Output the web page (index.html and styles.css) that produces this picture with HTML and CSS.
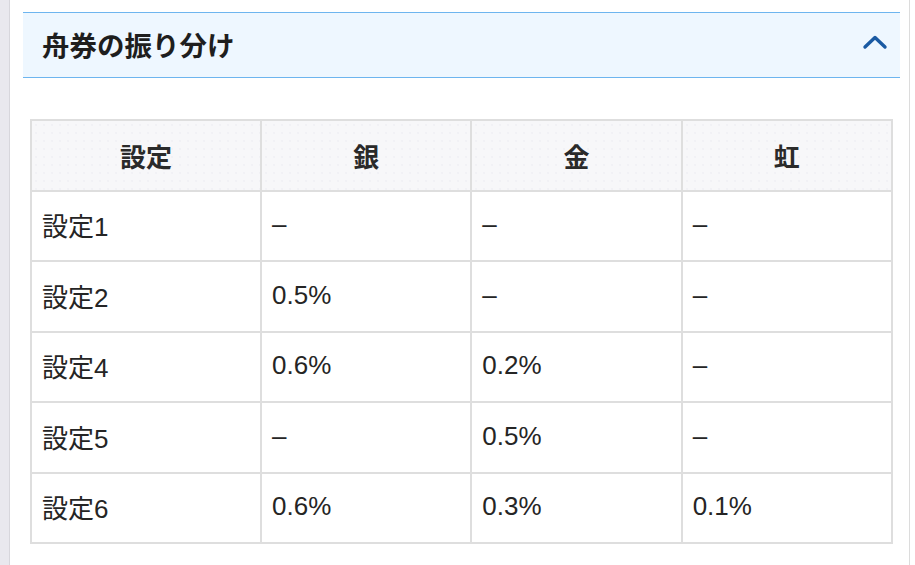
FILE: index.html
```html
<!DOCTYPE html>
<html lang="ja">
<head>
  <meta charset="UTF-8">
  <meta name="viewport" content="width=device-width, initial-scale=1.0">
  <title>舟券の振り分け</title>
  <link rel="stylesheet" href="styles.css">
</head>
<body>
  <div class="layout">
    <aside class="side"></aside>

    <main class="content">
      <!-- Accordion header -->
      <div class="acc-head">
        <h2>舟券の振り分け</h2>
        <svg class="chevron" width="26" height="16" viewBox="0 0 26 16">
          <polyline points="3,13 13,3.5 23,13" fill="none" stroke="#1a5aa3" stroke-width="3.4" stroke-linecap="round" stroke-linejoin="round"/>
        </svg>
      </div>

      <!-- Ticket table -->
      <table class="ticket-table">
        <colgroup>
          <col class="col-first">
          <col>
          <col>
          <col>
        </colgroup>
        <thead>
          <tr>
            <th>設定</th>
            <th>銀</th>
            <th>金</th>
            <th>虹</th>
          </tr>
        </thead>
        <tbody>
          <tr><td>設定1</td><td>–</td><td>–</td><td>–</td></tr>
          <tr><td>設定2</td><td>0.5%</td><td>–</td><td>–</td></tr>
          <tr><td>設定4</td><td>0.6%</td><td>0.2%</td><td>–</td></tr>
          <tr><td>設定5</td><td>–</td><td>0.5%</td><td>–</td></tr>
          <tr><td>設定6</td><td>0.6%</td><td>0.3%</td><td>0.1%</td></tr>
        </tbody>
      </table>
    </main>
  </div>
</body>
</html>
```

FILE: styles.css
```css
* {
  margin: 0;
  padding: 0;
  box-sizing: border-box;
}
body {
  font-family: "Liberation Sans", "Noto Sans CJK JP", sans-serif;
  background: #ffffff;
  color: #222;
  overflow: hidden;
}
.layout {
  display: flex;
  min-height: 565px;
}
.side {
  width: 10px;
  flex-shrink: 0;
  background: #e9e8ee;
  border-right: 1px solid #d7d6dc;
}
.content {
  width: 900px;
  border-right: 1px solid #dcdcdc;
  padding: 12px 0 0 13px;
}
.acc-head {
  display: flex;
  justify-content: space-between;
  align-items: center;
  width: 877px;
  height: 66px;
  padding: 0 12px 2px 19px;
  background: #eef7ff;
  border-top: 1px solid #6db5ef;
  border-bottom: 1px solid #6db5ef;
}
.acc-head h2 {
  font-size: 27.5px;
  font-weight: bold;
  color: #1e1e1e;
}
.chevron {
  display: block;
  margin-top: -5px;
}
.ticket-table {
  margin: 41px 0 0 7px;
  width: 863px;
  border-collapse: collapse;
  table-layout: fixed;
  border: 2px solid #dedede;
}
.col-first {
  width: 230px;
}
.ticket-table th,
.ticket-table td {
  border: 2px solid #dedede;
  height: 70.5px;
  vertical-align: middle;
}
.ticket-table th {
  font-size: 26px;
  font-weight: bold;
  color: #2a2a2a;
  text-align: center;
  background-color: #f7f7f9;
  background-image: radial-gradient(#ececf1 0.5px, transparent 1px);
  background-size: 8px 8px;
}
.ticket-table td {
  font-size: 26px;
  color: #252525;
  padding: 0 0 2px 10px;
}
```
